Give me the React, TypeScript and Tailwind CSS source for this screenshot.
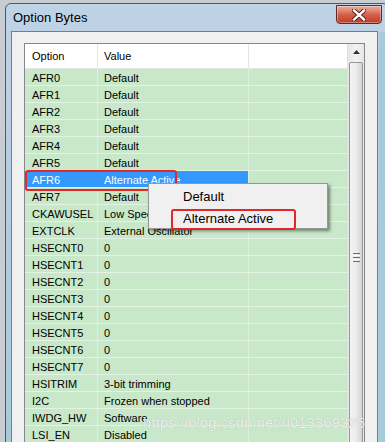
import React from "react";

const rows: [string, string][] = [
  ["AFR0", "Default"],
  ["AFR1", "Default"],
  ["AFR2", "Default"],
  ["AFR3", "Default"],
  ["AFR4", "Default"],
  ["AFR5", "Default"],
  ["AFR6", "Alternate Active"],
  ["AFR7", "Default"],
  ["CKAWUSEL", "Low Speed Internal Clock"],
  ["EXTCLK", "External Oscillator"],
  ["HSECNT0", "0"],
  ["HSECNT1", "0"],
  ["HSECNT2", "0"],
  ["HSECNT3", "0"],
  ["HSECNT4", "0"],
  ["HSECNT5", "0"],
  ["HSECNT6", "0"],
  ["HSECNT7", "0"],
  ["HSITRIM", "3-bit trimming"],
  ["I2C", "Frozen when stopped"],
  ["IWDG_HW", "Software"],
  ["LSI_EN", "Disabled"],
];

function CloseButton() {
  return (
    <div className="absolute right-[6px] top-[1px] flex h-[19px] w-[46px] items-center justify-center rounded-b-[4px] border border-[#5b2a22] bg-gradient-to-b from-[#eab2a2] via-[#d4604a] to-[#c23b22] shadow-[inset_0_0_0_1px_rgba(255,255,255,0.35)]">
      <svg width="14" height="12" viewBox="0 0 14 12">
        <path d="M2 1.5 L12 10.5 M12 1.5 L2 10.5" stroke="#4a1a12" strokeWidth="4.2" strokeLinecap="square" />
        <path d="M2 1.5 L12 10.5 M12 1.5 L2 10.5" stroke="#ffffff" strokeWidth="2.4" strokeLinecap="square" />
      </svg>
    </div>
  );
}

function Scrollbar() {
  return (
    <div className="flex w-[17px] flex-col border-l border-[#e0e0e0] bg-gradient-to-r from-[#e6e6e6] via-[#f2f2f2] to-[#e6e6e6]">
      <div className="flex h-[18px] items-center justify-center">
        <svg width="7" height="4" viewBox="0 0 7 4">
          <path d="M0 4 L3.5 0 L7 4 Z" fill="#303030" />
        </svg>
      </div>
      <div className="mx-[1px] mt-[2px] flex h-[420px] flex-col items-center rounded-[2px] border border-[#979797] bg-gradient-to-r from-[#f4f4f4] via-[#ececec] to-[#d4d4d4] pt-[190px]">
        <div className="flex flex-col gap-[1px]">
          <div className="h-[1px] w-[7px] bg-[#6e6e6e]" />
          <div className="h-[1px] w-[7px] bg-[#ffffff]" />
          <div className="h-[1px] w-[7px] bg-[#6e6e6e]" />
          <div className="h-[1px] w-[7px] bg-[#ffffff]" />
          <div className="h-[1px] w-[7px] bg-[#6e6e6e]" />
        </div>
      </div>
    </div>
  );
}

export default function App() {
  const font = { fontFamily: '"Liberation Sans", Arial, sans-serif' };
  return (
    <div
      className="relative h-[442px] w-[385px] overflow-hidden bg-[#c9cdd1]"
      style={font}
    >
      {/* window */}
      <div className="absolute left-[5px] top-[3px] h-[460px] w-[384px] rounded-tl-[6px] rounded-tr-[6px] border border-[#4d5a66] bg-gradient-to-b from-[#bfd3e6] via-[#b2cbe0] to-[#a6cbd9]">
        <div className="relative h-[27px]">
          <div className="pl-[7px] pt-[5px] text-[13px] leading-[17px] text-black">
            Option Bytes
          </div>
          <CloseButton />
        </div>
        {/* inner panel */}
        <div className="ml-[5px] h-[420px] w-[367px] border border-b-0 border-[#6f7f8f] bg-[#f0f0f0] pl-[12px] pt-[11px]">
          <div className="relative flex h-[420px] w-[341px] border border-[#828790] bg-white">
            <div className="flex w-[322px] flex-col">
              {/* header */}
              <div className="flex h-[25px] border-b border-[#e5e5e5] bg-white text-[11px] text-black">
                <div className="flex w-[73px] items-center border-r border-[#e5e5e5] pl-[7px]">Option</div>
                <div className="flex w-[151px] items-center border-r border-[#e5e5e5] pl-[6px]">Value</div>
                <div className="flex-1" />
              </div>
              {rows.map(([opt, val]) => {
                const sel = opt === "AFR6";
                return (
                  <div key={opt} className="flex h-[17px] border-b border-[#e4f4e4] bg-[#c8e8c9] text-[11px] leading-[15px]">
                    <div className={`w-[73px] border-r pl-[7px] pt-[2px] whitespace-nowrap ${sel ? "border-[#3399ff] bg-[#3399ff] text-white" : "border-[#dcefdc] text-black"}`}>
                      {opt}
                    </div>
                    <div className={`w-[151px] overflow-hidden border-r pl-[6px] pt-[2px] whitespace-nowrap ${sel ? "border-[#dcefdc] bg-[#3399ff] text-white" : "border-[#dcefdc] text-black"}`}>
                      {val}
                    </div>
                    <div className="flex-1" />
                  </div>
                );
              })}
            </div>
            <Scrollbar />
          </div>
        </div>
      </div>

      {/* right side blue backdrop line */}
      <div className="absolute right-0 top-[32px] h-[410px] w-[6px] bg-[#a7cadb]" />

      {/* red highlight around selected row */}
      <div className="absolute left-[25px] top-[170px] h-[21px] w-[152px] rounded-[3px] border-2 border-[#e3262b]" />

      {/* context menu */}
      <div className="absolute left-[148px] top-[183px] h-[46px] w-[180px] border border-[#979797] bg-[#f0f0f0] text-[13px] text-black shadow-[2px_2px_3px_rgba(0,0,0,0.45)]">
        <div className="pl-[34px] pt-[4px] leading-[18px]">Default</div>
        <div className="pl-[34px] pt-[4px] leading-[18px]">Alternate Active</div>
      </div>
      <div className="absolute left-[171px] top-[209px] h-[21px] w-[125px] rounded-[3px] border-2 border-[#e3262b]" />

      {/* watermark */}
      <div className="absolute left-[143px] top-[412px] whitespace-nowrap text-[15px] text-white/80 [text-shadow:0_0_1px_rgba(120,120,120,0.6)]">
        https://blog.csdn.net/u013369325
      </div>
    </div>
  );
}
